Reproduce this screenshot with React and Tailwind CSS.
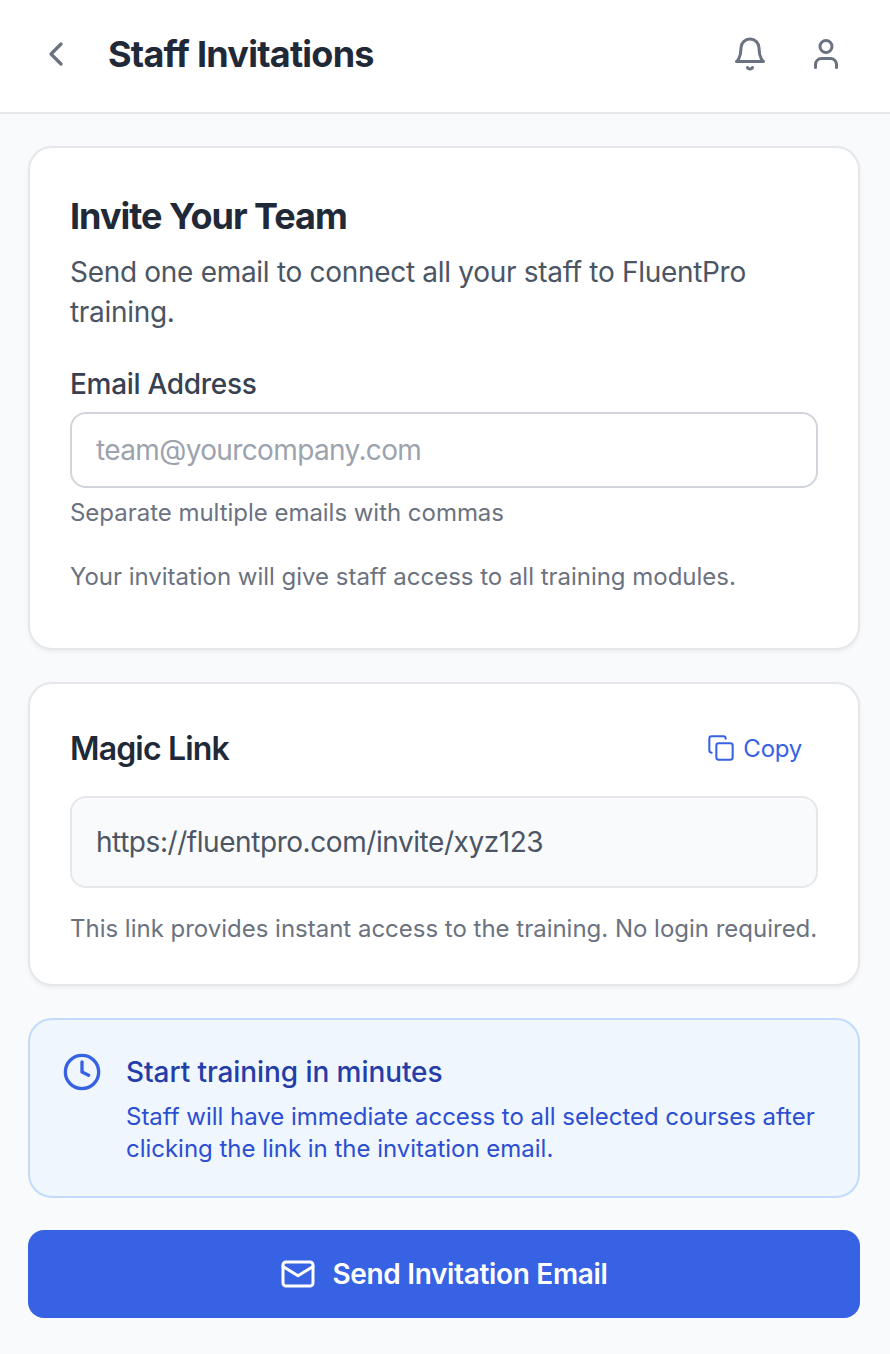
import React from "react";

const stroke = { fill: "none", stroke: "currentColor", strokeWidth: 2, strokeLinecap: "round", strokeLinejoin: "round", viewBox: "0 0 24 24" };

export default function App() {
  return (
    <div className="flex min-h-[1354px] flex-col bg-[#f9fafc] font-['Inter','Liberation_Sans',sans-serif] text-[#1f2937]">
      <header className="flex h-[114px] items-center border-b-2 border-[#e5e7eb] bg-white pr-[46px] pb-1 pl-9">
        <button aria-label="Back" className="text-[#6b7280]">
          <svg {...stroke} className="size-10"><path d="m15 18-6-6 6-6" /></svg>
        </button>
        <h1 className="ml-8 flex-1 text-[36px] leading-[44px] font-bold tracking-[-0.76px] whitespace-nowrap">Staff Invitations</h1>
        <div className="flex gap-10 text-[#6b7280]">
          <svg {...stroke} className="size-9"><path d="M6 8a6 6 0 0 1 12 0c0 7 3 9 3 9H3s3-2 3-9" /><path d="M10.3 21a1.94 1.94 0 0 0 3.4 0" /></svg>
          <svg {...stroke} className="size-9"><path d="M19 21v-2a4 4 0 0 0-4-4H9a4 4 0 0 0-4 4v2" /><circle cx="12" cy="7" r="4" /></svg>
        </div>
      </header>
      <main className="flex flex-col gap-8 pt-8 pr-[30px] pl-7">
        <section className="h-[504px] rounded-3xl border-2 border-[#e5e7eb] bg-white px-10 pt-10 shadow-[0_2px_4px_rgba(0,0,0,0.05)]">
          <h2 className="text-[36px] leading-[56px] font-bold tracking-[-1px] whitespace-nowrap">Invite Your Team</h2>
          <p className="mt-2 text-[28px] leading-10 tracking-[-0.3px] whitespace-nowrap text-[#4b5563]">Send one email to connect all your staff to FluentPro<br />training.</p>
          <label className="mt-8 block text-[28px] leading-10 font-medium tracking-[-0.3px] text-[#374151]">Email Address</label>
          <div className="mt-2 flex h-[76px] items-center rounded-2xl border-2 border-[#d1d5db] px-6 text-[28px] tracking-[-0.63px] text-[#9ca3af]">team@yourcompany.com</div>
          <p className="mt-[9px] text-[24px] leading-8 tracking-[-0.03px] text-[#6b7280]">Separate multiple emails with commas</p>
          <p className="mt-8 text-[24px] leading-8 tracking-[-0.02px] text-[#6b7280]">Your invitation will give staff access to all training modules.</p>
        </section>
        <section className="h-[304px] rounded-3xl border-2 border-[#e5e7eb] bg-white px-10 pt-10 shadow-[0_2px_4px_rgba(0,0,0,0.05)]">
          <div className="flex h-12 items-center justify-between">
            <h2 className="pt-0.5 text-[32px] font-semibold tracking-[-0.85px]">Magic Link</h2>
            <button className="mr-4 flex items-center gap-2 text-[24px] text-[#3762e3]">
              <svg {...stroke} strokeWidth={1.75} className="size-7"><rect width="14" height="14" x="8" y="8" rx="2" /><path d="M4 16c-1.1 0-2-.9-2-2V4c0-1.1.9-2 2-2h10c1.1 0 2 .9 2 2" /></svg>
              <span className="pt-0.5 tracking-[-0.25px]">Copy</span>
            </button>
          </div>
          <div className="mt-6 flex h-[92px] items-center rounded-2xl border-2 border-[#e5e7eb] bg-[#f9fafc] px-6 text-[28px] tracking-[-0.44px] text-[#4b5563]">https://fluentpro.com/invite/xyz123</div>
          <p className="mt-[25px] text-[24px] leading-8 tracking-[-0.01px] whitespace-nowrap text-[#6b7280]">This link provides instant access to the training. No login required.</p>
        </section>
        <section className="flex h-[180px] rounded-3xl border-2 border-[#c1dbfc] bg-[#eff6fe] pt-8 pl-8">
          <svg {...stroke} className="size-10 text-[#3762e3]"><circle cx="12" cy="12" r="10" /><path d="M12 6v6l4 2" /></svg>
          <div className="ml-6 whitespace-nowrap">
            <h3 className="text-[28px] leading-10 font-medium tracking-[-0.08px] text-[#253da8]">Start training in minutes</h3>
            <p className="mt-[9px] text-[24px] leading-8 tracking-[-0.02px] text-[#2c4ed2]">Staff will have immediate access to all selected courses after<br />clicking the link in the invitation email.</p>
          </div>
        </section>
        <button className="flex h-[88px] items-center justify-center gap-4 rounded-2xl bg-[#3762e3] text-[28px] font-semibold tracking-[-0.33px] text-white">
          <svg {...stroke} className="size-9"><rect width="20" height="16" x="2" y="4" rx="2" /><path d="m22 7-10 6.2L2 7" /></svg>
          <span>Send Invitation Email</span>
        </button>
      </main>
    </div>
  );
}
